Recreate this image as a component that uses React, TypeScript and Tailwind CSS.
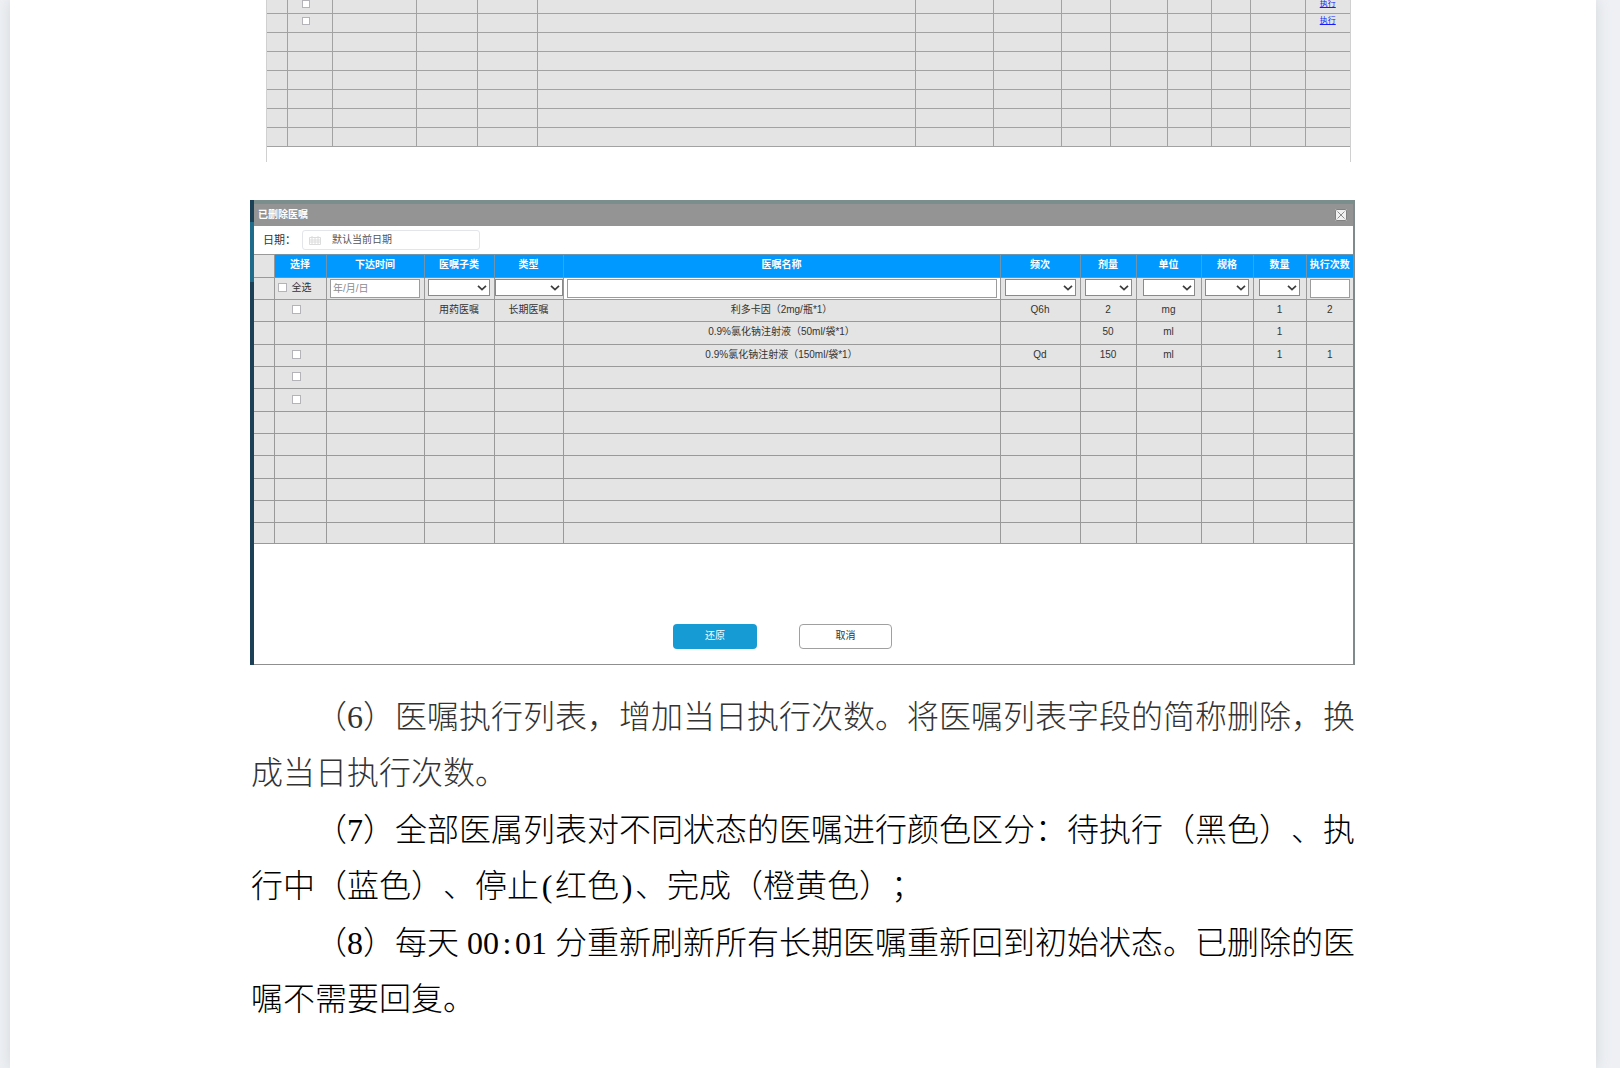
import type { ReactNode } from "react";

interface OrderColumn {
  label: string;
  col: string;
  filter: "check" | "date" | "select" | "text";
  width: string;
}

const columns: OrderColumn[] = [
  { label: "选择", col: "w-[52px]", filter: "check", width: "" },
  { label: "下达时间", col: "w-[98px]", filter: "date", width: "w-[90px]" },
  { label: "医嘱子类", col: "w-[70px]", filter: "select", width: "w-[62px]" },
  { label: "类型", col: "w-[69px]", filter: "select", width: "w-[68px]" },
  { label: "医嘱名称", col: "", filter: "text", width: "w-full" },
  { label: "频次", col: "w-[80px]", filter: "select", width: "w-[71px]" },
  { label: "剂量", col: "w-[56px]", filter: "select", width: "w-[47px]" },
  { label: "单位", col: "w-[65px]", filter: "select", width: "w-[52px]" },
  { label: "规格", col: "w-[52px]", filter: "select", width: "w-[44px]" },
  { label: "数量", col: "w-[53px]", filter: "select", width: "w-[41px]" },
  { label: "执行次数", col: "w-[47px]", filter: "text", width: "w-[40px]" },
];

const orders: { check: boolean; cells: string[] }[] = [
  { check: true, cells: ["", "用药医嘱", "长期医嘱", "利多卡因（2mg/瓶*1）", "Q6h", "2", "mg", "", "1", "2"] },
  { check: false, cells: ["", "", "", "0.9%氯化钠注射液（50ml/袋*1）", "", "50", "ml", "", "1", ""] },
  { check: true, cells: ["", "", "", "0.9%氯化钠注射液（150ml/袋*1）", "Qd", "150", "ml", "", "1", "1"] },
  { check: true, cells: Array(10).fill("") },
  { check: true, cells: Array(10).fill("") },
  ...Array.from({ length: 6 }, () => ({ check: false, cells: Array(10).fill("") })),
];

const listCols = [
  "w-[20px]", "w-[45px]", "w-[84px]", "w-[61px]", "w-[60px]", "", "w-[78px]",
  "w-[68px]", "w-[49px]", "w-[57px]", "w-[44px]", "w-[39px]", "w-[55px]", "w-[45px]",
];

function Tick({ label, size = "size-[9px]" }: { label: string; size?: string }) {
  return (
    <input
      type="checkbox"
      aria-label={label}
      className={`${size} block shrink-0 appearance-none border border-[#b4b4b8] bg-white checked:bg-[#0099ff]`}
    />
  );
}

function ExecutionList() {
  return (
    <div className="mr-[5px] ml-4 h-[162px] border-x border-[#d0d0d0]">
      <table className="w-full table-fixed border-collapse bg-[#e4e4e4] text-[8px]">
        <colgroup>
          {listCols.map((width, i) => (
            <col key={i} className={width} />
          ))}
        </colgroup>
        <tbody>
          {Array.from({ length: 8 }, (_, row) => (
            <tr key={row} className="h-[19px] first:h-[13px]">
              {listCols.map((_, i) => (
                <td
                  key={i}
                  className="border border-[#a2a2a2] p-0 pb-[3px] text-center leading-2 first:border-l-0 last:border-r-0 [tr:first-child>&]:border-t-0 [tr:first-child>&]:align-top"
                >
                  {row < 2 && i === 1 && (
                    <div className="flex justify-center pr-2">
                      <Tick label={`选择第${row + 1}行`} size="size-[8px]" />
                    </div>
                  )}
                  {row < 2 && i === listCols.length - 1 && (
                    <a href="#execute" className="block text-[#1a1aff] underline">
                      执行
                    </a>
                  )}
                </td>
              ))}
            </tr>
          ))}
        </tbody>
      </table>
    </div>
  );
}

function FilterSelect({ label, width }: { label: string; width: string }) {
  return (
    <div className={`relative h-[17px] shrink-0 ${width}`}>
      <select aria-label={label} className="block size-full appearance-none border border-[#8a8a8a] bg-white">
        <option value=""></option>
      </select>
      <svg
        viewBox="0 0 10 6"
        className="pointer-events-none absolute top-[6px] right-[3px] h-[6px] w-[10px]"
        fill="none"
        stroke="#3c3c3c"
        strokeWidth="1.7"
      >
        <path d="M1 .8 5 4.6 9 .8" />
      </svg>
    </div>
  );
}

function Filter({ column }: { column: OrderColumn }) {
  if (column.filter === "check") {
    return (
      <label className="flex h-[17px] items-center gap-[5px] pl-[3px]">
        <Tick label="全选" />
        全选
      </label>
    );
  }
  if (column.filter === "select") {
    return <FilterSelect label={column.label} width={column.width} />;
  }
  return (
    <input
      type="text"
      aria-label={column.label}
      placeholder={column.filter === "date" ? "年/月/日" : undefined}
      className={`block h-[19px] border border-[#9c9c9c] bg-white px-[2px] placeholder:text-[#8c8c8c] ${column.width}`}
    />
  );
}

function DeletedOrders() {
  return (
    <section className="mr-px flex border-r-2 border-[#7f8a8a] text-[10px] leading-3 text-[#333]">
      <div className="w-1 shrink-0 bg-[#1c4157]">
        <div className="mt-[22px] h-[60px] bg-[#1f6b8c]" />
      </div>
      <div className="min-w-0 flex-1 border-b border-[#8f8f8f] bg-white">
        <header className="flex h-[26px] items-center justify-between border-t-4 border-[#7a8f8c] bg-[#949494] pr-[6px] pl-1">
          <h2 className="font-bold text-white">已删除医嘱</h2>
          <button type="button" aria-label="关闭" className="size-3 rounded-xs bg-[#f0f0f0]">
            <svg viewBox="0 0 12 12" className="size-3" fill="none" stroke="#8c8c8c">
              <rect x=".5" y=".5" width="11" height="11" rx="1.5" stroke="#808080" />
              <path d="m2.5 2.5 7 7m0-7-7 7" />
            </svg>
          </button>
        </header>

        <div className="flex h-7 items-center pl-[9px]">
          <label htmlFor="order-date" className="w-[39px] text-[11px]">
            日期：
          </label>
          <div className="flex h-5 w-[178px] items-center gap-[11px] rounded-[3px] border border-[#e3e5ea] pl-[6px]">
            <svg viewBox="0 0 12 9" className="h-[9px] w-3" fill="none" stroke="#dcdcdc">
              <path d="M.5 1.5h11v7H.5zM.5 4h11M3 0v8M6 2v6M9 0v8M.5 6h11" />
            </svg>
            <input
              id="order-date"
              type="text"
              placeholder="默认当前日期"
              className="w-32 outline-none placeholder:text-[#555]"
            />
          </div>
        </div>

        <table className="w-full table-fixed border-collapse bg-[#e4e4e4]">
          <colgroup>
            <col className="w-[20px]" />
            {columns.map((column) => (
              <col key={column.label} className={column.col} />
            ))}
          </colgroup>
          <thead>
            <tr className="h-[23px]">
              <td className="border border-l-0 border-[#999] p-0" />
              {columns.map((column) => (
                <th
                  key={column.label}
                  scope="col"
                  className="border border-[#6f95ae] bg-[#0099ff] p-0 pb-[2px] font-bold whitespace-nowrap text-white last:border-r-0"
                >
                  {column.label}
                </th>
              ))}
            </tr>
          </thead>
          <tbody>
            <tr className="h-[22px]">
              <td className="border border-l-0 border-[#999] p-0" />
              {columns.map((column) => (
                <td
                  key={column.label}
                  className={
                    column.label === "医嘱名称"
                      ? "border border-[#999] bg-white px-[3px] py-0"
                      : "border border-[#999] p-0 last:border-r-0"
                  }
                >
                  <div className={column.filter === "check" ? "flex h-[19px]" : "flex h-[19px] justify-center"}>
                    <Filter column={column} />
                  </div>
                </td>
              ))}
            </tr>
            {orders.map((order, row) => (
              <tr key={row} className="h-[22px] nth-[3n]:h-[23px] last:h-[21px]!">
                <td className="border border-l-0 border-[#999] p-0" />
                <td className="border border-[#999] p-0 pb-[2px]">
                  {order.check && (
                    <div className="flex justify-center pr-2">
                      <Tick label={`选择第${row + 1}行`} />
                    </div>
                  )}
                </td>
                {order.cells.map((cell, i) => (
                  <td
                    key={i}
                    className="border border-[#999] p-0 pb-[2px] text-center whitespace-nowrap last:border-r-0"
                  >
                    {cell}
                  </td>
                ))}
              </tr>
            ))}
          </tbody>
        </table>

        <footer className="flex justify-center gap-[42px] pt-20 pr-[42px] pb-[15px]">
          <button type="button" className="h-[25px] w-[84px] rounded-sm bg-[#169bd5] pb-px text-white">
            还原
          </button>
          <button type="button" className="h-[25px] w-[93px] rounded-sm border border-[#a0a0a0] bg-white pb-px">
            取消
          </button>
        </footer>
      </div>
    </section>
  );
}

/** Half-em cell, for latin marks set on the same grid as the digits. */
function Half({ children }: { children: ReactNode }) {
  return <span className="inline-block w-4 text-center indent-0">{children}</span>;
}

export default function App() {
  return (
    <div className="min-h-screen overflow-hidden bg-[#eef0f4] pr-6 pl-[10px] font-['Liberation_Sans','Noto_Sans_CJK_SC',sans-serif]">
      <main className="min-h-screen bg-white shadow-[0_0_14px_#d3d8da]">
        <div className="mx-auto flex w-full max-w-[1106px] flex-col">
          <ExecutionList />
          <div className="mt-[38px]">
            <DeletedOrders />
          </div>
          <article className="mt-6 flex flex-col gap-px pl-px font-['Liberation_Serif','Noto_Sans_CJK_SC',serif] text-[32px] leading-14 font-light text-black [text-spacing-trim:space-all]">
            <p className="indent-16 text-[#333]">
              （6）医嘱执行列表，增加当日执行次数。将医嘱列表字段的简称删除，换成当日执行次数。
            </p>
            <p className="indent-16">
              （7）全部医属列表对不同状态的医嘱进行颜色区分：待执行（黑色）、执行中（蓝色）、停止<Half>(</Half>红色<Half>)</Half>、完成（橙黄色）；
            </p>
            <p className="indent-16">
              （8）每天<span className="mx-2">00<Half>:</Half>01</span>分重新刷新所有长期医嘱重新回到初始状态。已删除的医嘱不需要回复。
            </p>
          </article>
        </div>
      </main>
    </div>
  );
}
